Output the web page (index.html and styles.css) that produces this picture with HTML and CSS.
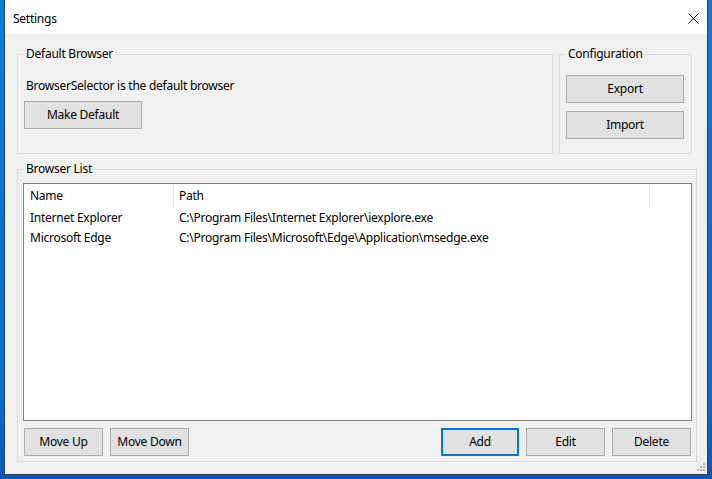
FILE: index.html
```html
<!DOCTYPE html>
<html lang="en">

<head>
    <meta charset="UTF-8">
    <title>Settings</title>
    <link rel="stylesheet" href="styles.css">
</head>

<body>
    <div class="window">
        <div class="titlebar">
            <span class="title">Settings</span>
            <svg class="close" width="11" height="11" viewBox="0 0 11 11">
                <path d="M0.5 0.5 L10.5 10.5 M10.5 0.5 L0.5 10.5" stroke="#000" stroke-width="1" fill="none" />
            </svg>
        </div>
        <div class="content">
            <div class="top-row">
                <div class="group group-default">
                    <span class="group-title">Default Browser</span>
                    <p class="status">BrowserSelector is the default browser</p>
                    <button class="btn btn-make">Make Default</button>
                </div>
                <div class="group group-config">
                    <span class="group-title">Configuration</span>
                    <button class="btn btn-export">Export</button>
                    <button class="btn btn-import">Import</button>
                </div>
            </div>
            <div class="group group-list">
                <span class="group-title">Browser List</span>
                <div class="listview">
                    <div class="list-head">
                        <div class="cell col-name">Name</div>
                        <div class="cell col-path">Path</div>
                    </div>
                    <div class="list-row">
                        <div class="cell col-name">Internet Explorer</div>
                        <div class="cell col-path">C:\Program Files\Internet Explorer\iexplore.exe</div>
                    </div>
                    <div class="list-row">
                        <div class="cell col-name">Microsoft Edge</div>
                        <div class="cell col-path">C:\Program Files\Microsoft\Edge\Application\msedge.exe</div>
                    </div>
                </div>
                <div class="list-actions">
                    <button class="btn">Move Up</button>
                    <button class="btn">Move Down</button>
                    <span class="spacer"></span>
                    <button class="btn btn-default btn-add">Add</button>
                    <button class="btn">Edit</button>
                    <button class="btn">Delete</button>
                </div>
            </div>
        </div>
        <svg class="grip" width="9" height="9" viewBox="0 0 9 9">
            <rect x="6" y="0" width="2" height="2" fill="#b4b4b4" />
            <rect x="3" y="3" width="2" height="2" fill="#b4b4b4" />
            <rect x="6" y="3" width="2" height="2" fill="#b4b4b4" />
            <rect x="0" y="6" width="2" height="2" fill="#b4b4b4" />
            <rect x="3" y="6" width="2" height="2" fill="#b4b4b4" />
            <rect x="6" y="6" width="2" height="2" fill="#b4b4b4" />
        </svg>
    </div>
</body>

</html>
```
FILE: styles.css
```css
* {
    box-sizing: border-box;
}

body {
    margin: 0;
    padding: 0 4px;
    height: 479px;
    overflow: hidden;
    background: linear-gradient(180deg, #0c7bd9 0%, #0a6fcf 80%, #0858b8 100%);
    font-family: "Noto Sans", "Segoe UI", sans-serif;
    font-size: 12px;
    letter-spacing: -0.25px;
    color: #000;
}

.window {
    position: relative;
    width: 704px;
    height: 475px;
    background-color: #f0f0f0;
    border: 1px solid #3a3a3a;
    border-top: none;
}

.titlebar {
    height: 34px;
    background-color: #fff;
    display: flex;
    align-items: center;
    justify-content: space-between;
    padding: 0 8px 0 8px;
}

.title {
    font-size: 12px;
    line-height: 16px;
    margin-top: 3px;
}

.close {
    display: block;
    margin-top: 2px;
}

.content {
    padding: 20px 0 0 12px;
}

.top-row {
    display: flex;
    gap: 6px;
}

.group {
    border: 1px solid #dcdcdc;
    display: flex;
    flex-direction: column;
    align-items: flex-start;
}

.group-title {
    margin: -9px 0 0 6px;
    padding: 0 2px;
    line-height: 16px;
    background-color: #f0f0f0;
}

.group-default {
    width: 536px;
    height: 100px;
}

.group-config {
    width: 133px;
    height: 100px;
}

.group-list {
    width: 680px;
    height: 293px;
    margin-top: 15px;
}

.status {
    margin: 16px 0 0 8px;
    line-height: 16px;
}

.btn {
    font-family: inherit;
    font-size: 12px;
    letter-spacing: inherit;
    color: #000;
    background-color: #e1e1e1;
    border: 1px solid #adadad;
    height: 28px;
    width: 79px;
    padding: 0;
    margin: 0;
    line-height: 16px;
}

.btn-make {
    width: 118px;
    margin: 7px 0 0 6px;
}

.btn-export,
.btn-import {
    width: 118px;
    margin-left: 6px;
}

.btn-export {
    margin-top: 13px;
}

.btn-import {
    margin-top: 8px;
}

.btn-default {
    border: 2px solid #0078d7;
}

.btn-add {
    width: 78px;
}

.listview {
    width: 669px;
    height: 238px;
    margin: 6px 0 0 5px;
    background-color: #fff;
    border: 1px solid #828282;
}

.list-head {
    display: flex;
    height: 24px;
}

.list-head .cell {
    line-height: 24px;
    border-right: 1px solid #e5e5e5;
}

.list-row {
    display: flex;
    height: 20px;
    line-height: 19px;
}

.cell {
    white-space: nowrap;
}

.col-name {
    width: 150px;
    padding-left: 6px;
}

.col-path {
    width: 476px;
    padding-left: 5px;
}

.list-actions {
    display: flex;
    gap: 7px;
    width: 667px;
    margin: 7px 0 0 6px;
}

.spacer {
    flex-grow: 1;
}

.grip {
    position: absolute;
    right: 1px;
    bottom: 2px;
}
```
